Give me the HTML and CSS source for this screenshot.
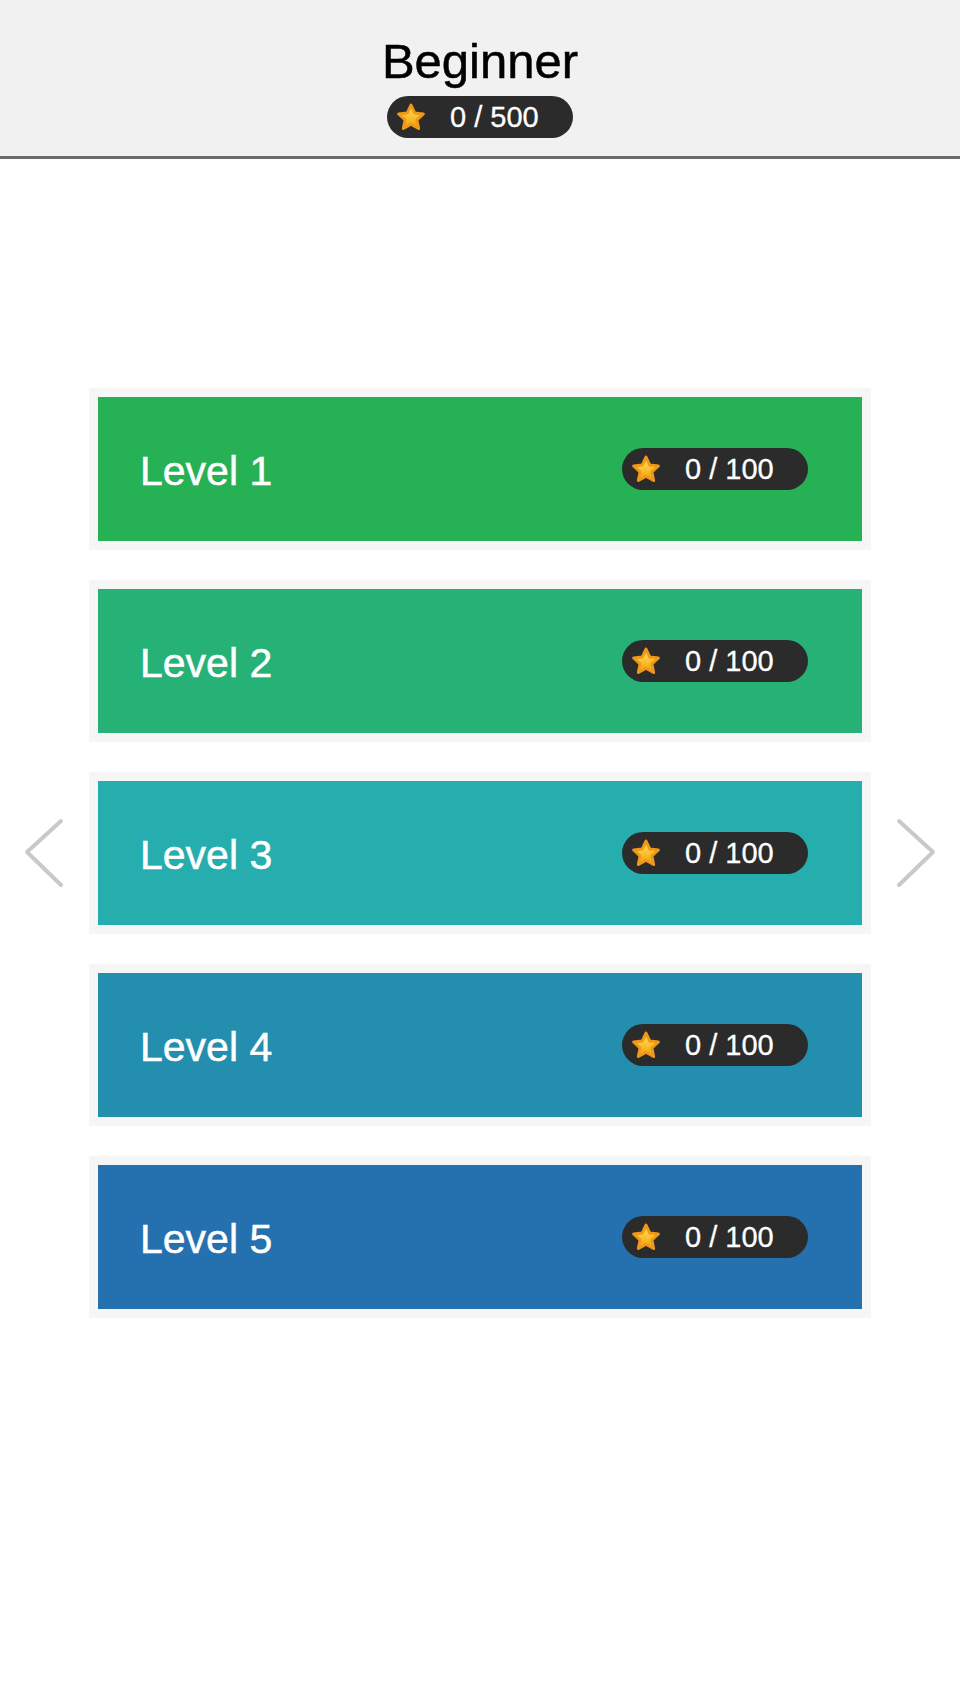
FILE: index.html
```html
<!DOCTYPE html>
<html lang="en">
<head>
<meta charset="utf-8">
<title>Beginner</title>
<link rel="stylesheet" href="styles.css">
</head>
<body>
<svg width="0" height="0" class="defs" aria-hidden="true">
  <defs>
    <linearGradient id="starFill" x1="0" y1="0" x2="0" y2="1">
      <stop offset="0" stop-color="#ffe066"/>
      <stop offset="0.55" stop-color="#fbbf2c"/>
      <stop offset="1" stop-color="#f29a12"/>
    </linearGradient>
    <symbol id="star" viewBox="0 0 30 30">
      <path d="M15,3 L18.64,10.98 L27.36,11.98 L20.9,17.92 L22.64,26.52 L15,22.2 L7.36,26.52 L9.1,17.92 L2.64,11.98 L11.36,10.98 Z" fill="url(#starFill)" stroke="#ee9a18" stroke-width="3" stroke-linejoin="round"/>
    </symbol>
  </defs>
</svg>

<header class="topbar">
  <h1 class="title">Beginner</h1>
  <div class="pill">
    <svg class="star" width="30" height="30"><use href="#star"/></svg>
    <span class="pill-text">0 / 500</span>
  </div>
</header>

<main class="stage">
  <div class="nav nav-left">
    <svg width="40" height="72" viewBox="0 0 40 72"><polyline points="37,4 3,35 37,68" fill="none" stroke="#c9c9c9" stroke-width="4" stroke-linecap="round" stroke-linejoin="round"/></svg>
  </div>

  <ul class="levels">
    <li class="card"><div class="card-inner lv1"><span class="lv-name">Level 1</span><div class="pill"><svg class="star" width="30" height="30"><use href="#star"/></svg><span class="pill-text">0 / 100</span></div></div></li>
    <li class="card"><div class="card-inner lv2"><span class="lv-name">Level 2</span><div class="pill"><svg class="star" width="30" height="30"><use href="#star"/></svg><span class="pill-text">0 / 100</span></div></div></li>
    <li class="card"><div class="card-inner lv3"><span class="lv-name">Level 3</span><div class="pill"><svg class="star" width="30" height="30"><use href="#star"/></svg><span class="pill-text">0 / 100</span></div></div></li>
    <li class="card"><div class="card-inner lv4"><span class="lv-name">Level 4</span><div class="pill"><svg class="star" width="30" height="30"><use href="#star"/></svg><span class="pill-text">0 / 100</span></div></div></li>
    <li class="card"><div class="card-inner lv5"><span class="lv-name">Level 5</span><div class="pill"><svg class="star" width="30" height="30"><use href="#star"/></svg><span class="pill-text">0 / 100</span></div></div></li>
  </ul>

  <div class="nav nav-right">
    <svg width="40" height="72" viewBox="0 0 40 72"><polyline points="3,4 37,35 3,68" fill="none" stroke="#c9c9c9" stroke-width="4" stroke-linecap="round" stroke-linejoin="round"/></svg>
  </div>
</main>
</body>
</html>
```

FILE: styles.css
```css
* { box-sizing: border-box; }

html, body {
  margin: 0;
  padding: 0;
  background: #ffffff;
  font-family: "Liberation Sans", Arial, Helvetica, sans-serif;
}

.defs { position: absolute; width: 0; height: 0; overflow: hidden; }

.topbar {
  background: #f1f1f1;
  border-bottom: 3px solid #6a6a6a;
  height: 159px;
  padding-top: 37px;
  display: flex;
  flex-direction: column;
  align-items: center;
}

.title {
  margin: 0;
  font-size: 49px;
  line-height: 48px;
  font-weight: normal;
  color: #000;
  -webkit-text-stroke: 0.5px #000;
}

.topbar .pill {
  margin-top: 11px;
}

.pill {
  display: flex;
  align-items: center;
  height: 42px;
  width: 186px;
  padding-left: 9px;
  background: #2b2b2b;
  border-radius: 21px;
  color: #fff;
}

.star { display: block; flex: none; }

.pill-text {
  margin-left: 24px;
  font-size: 29px;
  line-height: 1;
  color: #ffffff;
  -webkit-text-stroke: 0.3px #fff;
}

.stage {
  display: grid;
  grid-template-columns: 89px 782px 89px;
  align-items: center;
  padding-top: 229px;
}

.nav {
  display: flex;
  justify-content: center;
  align-items: center;
}
.nav svg { display: block; }
.nav-left { padding-right: 1px; }
.nav-right { padding-left: 1px; }

.levels {
  list-style: none;
  margin: 0;
  padding: 0;
  display: flex;
  flex-direction: column;
  gap: 30px;
}

.card {
  background: #f6f6f6;
  padding: 9px;
  height: 162px;
}

.card-inner {
  height: 144px;
  display: flex;
  align-items: center;
  justify-content: space-between;
  padding-left: 42px;
  padding-right: 54px;
}

.lv-name {
  color: #ffffff;
  font-size: 41px;
  line-height: 1;
  padding-top: 4px;
  -webkit-text-stroke: 0.5px #fff;
}

.lv1 { background: #25b154; }
.lv2 { background: #26b276; }
.lv3 { background: #26adad; }
.lv4 { background: #248eae; }
.lv5 { background: #2570ae; }
```
